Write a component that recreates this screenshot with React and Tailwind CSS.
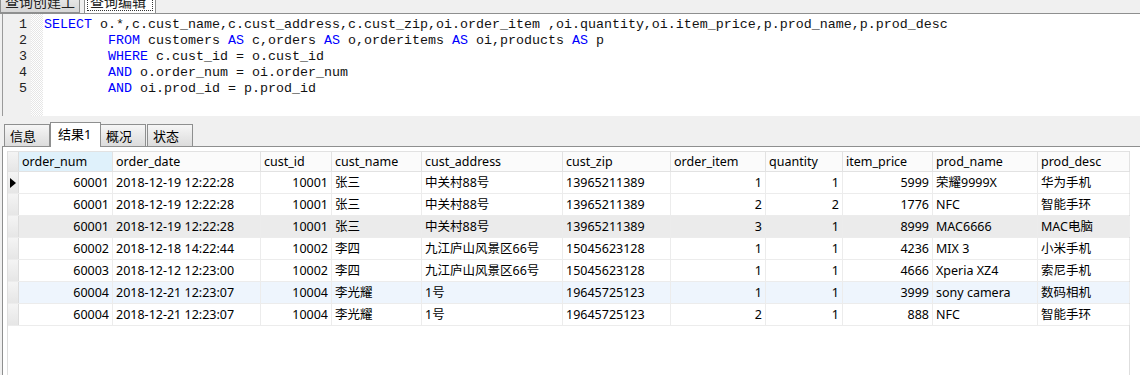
import React from 'react';

const cols = [
  { key: 'order_num', w: 'w-[94px]', right: true },
  { key: 'order_date', w: 'w-[148px]' },
  { key: 'cust_id', w: 'w-[71px]', right: true },
  { key: 'cust_name', w: 'w-[90px]' },
  { key: 'cust_address', w: 'w-[141px]' },
  { key: 'cust_zip', w: 'w-[108px]' },
  { key: 'order_item', w: 'w-[95px]', right: true },
  { key: 'quantity', w: 'w-[77px]', right: true },
  { key: 'item_price', w: 'w-[90px]', right: true },
  { key: 'prod_name', w: 'w-[105px]' },
  { key: 'prod_desc', w: 'w-[92px]' },
];

const rows = [
  ['60001', '2018-12-19 12:22:28', '10001', '张三', '中关村88号', '13965211389', '1', '1', '5999', '荣耀9999X', '华为手机'],
  ['60001', '2018-12-19 12:22:28', '10001', '张三', '中关村88号', '13965211389', '2', '2', '1776', 'NFC', '智能手环'],
  ['60001', '2018-12-19 12:22:28', '10001', '张三', '中关村88号', '13965211389', '3', '1', '8999', 'MAC6666', 'MAC电脑'],
  ['60002', '2018-12-18 14:22:44', '10002', '李四', '九江庐山风景区66号', '15045623128', '1', '1', '4236', 'MIX 3', '小米手机'],
  ['60003', '2018-12-12 12:23:00', '10002', '李四', '九江庐山风景区66号', '15045623128', '1', '1', '4666', 'Xperia XZ4', '索尼手机'],
  ['60004', '2018-12-21 12:23:07', '10004', '李光耀', '1号', '19645725123', '1', '1', '3999', 'sony camera', '数码相机'],
  ['60004', '2018-12-21 12:23:07', '10004', '李光耀', '1号', '19645725123', '2', '1', '888', 'NFC', '智能手环'],
];

const rowBg = ['bg-white', 'bg-white', 'bg-[#ebebeb]', 'bg-white', 'bg-white', 'bg-[#eef5fd]', 'bg-white'];

const K = ({ children }) => <span className="text-[#0000ff]">{children}</span>;

const codeLines = [
  <>
    <K>SELECT</K> o.*,c.cust_name,c.cust_address,c.cust_zip,oi.order_item ,oi.quantity,oi.item_price,p.prod_name,p.prod_desc
  </>,
  <>
    {'        '}<K>FROM</K> customers <K>AS</K> c,orders <K>AS</K> o,orderitems <K>AS</K> oi,products <K>AS</K> p
  </>,
  <>
    {'        '}<K>WHERE</K> c.cust_id = o.cust_id
  </>,
  <>
    {'        '}<K>AND</K> o.order_num = oi.order_num
  </>,
  <>
    {'        '}<K>AND</K> oi.prod_id = p.prod_id
  </>,
];

function BottomTab({ label, active }) {
  if (active) {
    return (
      <div className="h-[25px] w-[51px] -mb-px border border-b-0 border-[#8e8f8f] bg-white pl-[7px] pt-[2px] text-[13px] leading-[18px] relative z-10">
        {label}
      </div>
    );
  }
  return (
    <div className="h-[22px] w-[46px] border border-b-0 border-[#8e8f8f] bg-gradient-to-b from-[#f6f6f6] to-[#dcdcdc] pl-[5px] pt-[2px] text-[13px] leading-[18px] -ml-px first:ml-0">
      {label}
    </div>
  );
}

export default function App() {
  return (
    <div className="w-[1140px] h-[375px] overflow-hidden bg-[#f0f0f0] font-['Noto_Sans','Noto_Sans_CJK_SC',sans-serif] text-black">
      {/* top tabs, mostly scrolled out of view */}
      <div className="flex items-end h-[13px] overflow-hidden">
        <div className="flex items-end">
          <div className="h-[24px] w-[80px] border border-[#8e8f8f] bg-gradient-to-b from-[#f3f3f3] to-[#d6d6d6] text-[14px] leading-[18px] pl-[4px] pt-[3px] text-[#222] overflow-hidden">
            查询创建工具
          </div>
          <div className="ml-[4px] h-[24px] w-[72px] border border-b-0 border-[#8e8f8f] bg-white p-[2px]">
            <div className="h-full border border-dotted border-[#333] text-[14px] leading-[18px] pl-[2px] text-[#222] overflow-hidden">
              查询编辑器
            </div>
          </div>
        </div>
      </div>
      <div className="h-px bg-[#8e8f8f]" />

      {/* editor */}
      <div className="ml-[2px] h-[102px] border-l border-[#9a9a9a] bg-white flex">
        <div className="w-[28px] bg-[#f0f0f0] pt-[3px] font-['Liberation_Mono',monospace] text-[13.33px] leading-[16px] text-[#222] text-right pr-[4px]">
          {codeLines.map((_, i) => (
            <div key={i}>{i + 1}</div>
          ))}
        </div>
        <div className="w-[12px] bg-[repeating-conic-gradient(#e6e6e6_0_25%,#ffffff_0_50%)] bg-[length:2px_2px]" />
        <div className="pl-px pt-[3px] font-['Liberation_Mono',monospace] text-[13.33px] leading-[16px] text-[#111] whitespace-pre">
          {codeLines.map((l, i) => (
            <div key={i}>{l}</div>
          ))}
        </div>
      </div>

      {/* bottom tabs */}
      <div className="h-[6px]" />
      <div className="flex items-end pl-[4px] h-[24px]">
        <BottomTab label="信息" />
        <BottomTab label="结果1" active />
        <BottomTab label="概况" />
        <div className="ml-px">
          <BottomTab label="状态" />
        </div>
      </div>

      {/* result panel */}
      <div className="ml-[2px] h-[230px] border-t border-l border-[#8e8f8f] bg-white pt-[4px] pl-[4px]">
        <div className="w-[1123px] border-l border-r border-[#dedede] h-full text-[12.5px]">
          {/* header */}
          <div className="flex h-[21px] border-t border-b border-[#e2e2e2] leading-[20px]">
            <div className="w-[11px] shrink-0 bg-gradient-to-b from-[#f4f4f4] to-[#e6e6e6] border-r border-[#dcdcdc]" />
            {cols.map((c, i) => (
              <div
                key={c.key}
                className={`${c.w} shrink-0 border-r border-[#e2e2e2] pl-[3px] ${i === 0 ? 'bg-[#dff1fb]' : 'bg-[#fbfbfb]'}`}
              >
                {c.key}
              </div>
            ))}
          </div>
          {/* rows */}
          {rows.map((r, ri) => (
            <div key={ri} className={`flex h-[22px] border-b border-[#ececec] leading-[21px] ${rowBg[ri]}`}>
              <div className="w-[11px] shrink-0 bg-gradient-to-b from-[#f4f4f4] to-[#e6e6e6] border-r border-[#dcdcdc] flex items-center justify-center">
                {ri === 0 && (
                  <svg width="6" height="10" viewBox="0 0 6 10">
                    <path d="M0 0 L6 5 L0 10 Z" fill="#000" />
                  </svg>
                )}
              </div>
              {cols.map((c, ci) => (
                <div
                  key={c.key}
                  className={`${c.w} shrink-0 border-r border-[#ececec] whitespace-nowrap overflow-hidden ${c.right ? 'text-right pr-[3px]' : 'pl-[3px]'}`}
                >
                  {r[ci]}
                </div>
              ))}
            </div>
          ))}
        </div>
      </div>
    </div>
  );
}
